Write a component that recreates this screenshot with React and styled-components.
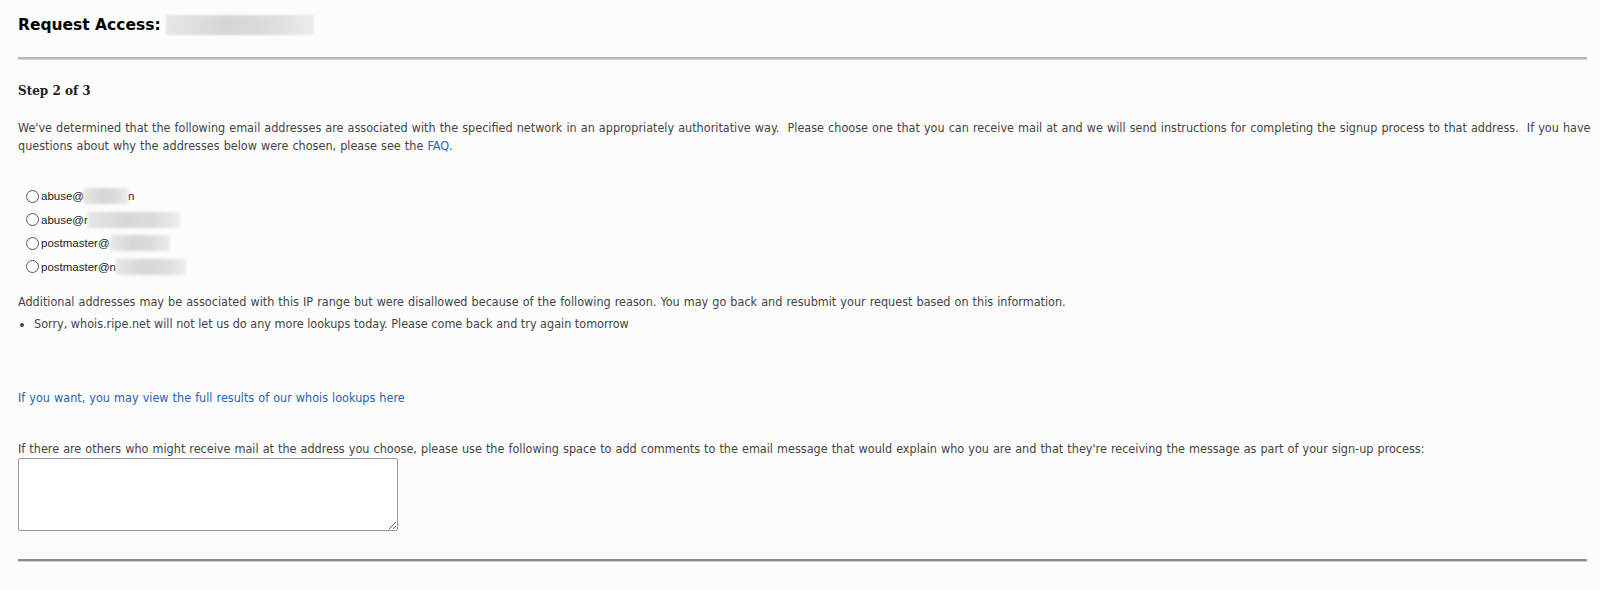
import React from "react";
import styled, { createGlobalStyle } from "styled-components";

const Global = createGlobalStyle`
  html, body { margin: 0; padding: 0; background: #fcfcfc; }
  body { font-family: "Liberation Sans", Arial, sans-serif; color: #333; }
`;

const Page = styled.div`
  padding: 14px 13px 0 18px;
  height: 590px;
  box-sizing: border-box;
`;

const Title = styled.h1`
  margin: 0;
  display: flex;
  align-items: center;
  font-family: "DejaVu Sans", Verdana, sans-serif;
  font-size: 15.5px;
  font-weight: bold;
  color: #000;
  height: 21px;
`;

const Blur = styled.span`
  display: inline-block;
  width: ${(p) => p.$w}px;
  height: ${(p) => p.$h}px;
  background: linear-gradient(90deg, #e6e6e6, #d6d6d6 40%, #dcdcdc 70%, #ececec);
  filter: blur(${(p) => p.$blur || 1}px);
  margin-left: ${(p) => p.$ml || 0}px;
`;

const Rule = styled.div`
  height: 0;
  border-top: 2px solid ${(p) => (p.$dark ? "#8a8a8a" : "#b8b8b8")};
  border-bottom: 1px solid #d4d4d4;
  margin: ${(p) => p.$m};
`;

const Step = styled.div`
  font-family: "DejaVu Serif", Georgia, serif;
  font-weight: bold;
  font-size: 12px;
  color: #222;
  margin-top: 24px;
`;

const Para = styled.p`
  margin: ${(p) => p.$m || "0"};
  font-size: 12.5px;
  line-height: 18px;
  color: #444;
  font-family: "DejaVu Sans Condensed", "Liberation Sans", sans-serif;
  word-spacing: 0.5px;
`;

const Link = styled.a`
  color: #2862b0;
  text-decoration: none;
`;

const RadioList = styled.div`
  display: flex;
  flex-direction: column;
  gap: 5.5px;
  margin: 32px 0 0 8px;
`;

const RadioRow = styled.label`
  display: flex;
  align-items: center;
  height: 18px;
  font-family: "Liberation Sans", Arial, sans-serif;
  font-size: 11.5px;
  color: #222;
`;

const Radio = styled.span`
  width: 13px;
  height: 13px;
  border: 1px solid #555;
  border-radius: 50%;
  background: #fff;
  margin-right: 2px;
  box-sizing: border-box;
`;

const Bullets = styled.ul`
  margin: 4px 0 0 0;
  padding-left: 16px;
  font-size: 12.5px;
  line-height: 18px;
  color: #444;
  font-family: "DejaVu Sans Condensed", "Liberation Sans", sans-serif;
  li::marker { font-size: 12px; }
`;

const TextArea = styled.textarea`
  display: block;
  width: 380px;
  height: 73px;
  margin: 0;
  border: 1px solid #999;
  border-radius: 2px;
  background: #fff;
  box-sizing: border-box;
  resize: both;
`;

const emails = [
  { pre: "abuse@", mid: "", w: 44, tail: "n" },
  { pre: "abuse@", mid: "r", w: 92, tail: "" },
  { pre: "postmaster@", mid: "", w: 60, tail: "" },
  { pre: "postmaster@", mid: "n", w: 70, tail: "" },
];

export default function App() {
  return (
    <>
      <Global />
      <Page>
        <Title>
          Request Access:&nbsp;<Blur $w={148} $h={20} />
        </Title>
        <Rule $m="22px 0 0 0" />
        <Step>Step 2 of 3</Step>
        <Para $m="21px -10px 0 0">
          We've determined that the following email addresses are associated with the specified network in an appropriately authoritative way.&nbsp; Please choose one that you can receive mail at and we will send instructions for completing the signup process to that address.&nbsp; If you have questions about why the addresses below were chosen, please see the <Link href="#">FAQ</Link>.
        </Para>
        <RadioList>
          {emails.map((e, i) => (
            <RadioRow key={i}>
              <Radio />
              {e.pre}
              {e.mid}
              <Blur $w={e.w} $h={16} $blur={1.5} />
              {e.tail}
            </RadioRow>
          ))}
        </RadioList>
        <Para $m="17px 0 0 0">
          Additional addresses may be associated with this IP range but were disallowed because of the following reason. You may go back and resubmit your request based on this information.
        </Para>
        <Bullets>
          <li>Sorry, whois.ripe.net will not let us do any more lookups today. Please come back and try again tomorrow</li>
        </Bullets>
        <Para $m="56px 0 0 0">
          <Link href="#">If you want, you may view the full results of our whois lookups here</Link>
        </Para>
        <Para $m="33px 0 0 0">
          If there are others who might receive mail at the address you choose, please use the following space to add comments to the email message that would explain who you are and that they're receiving the message as part of your sign-up process:
        </Para>
        <TextArea />
        <Rule $dark $m="28px 0 0 0" />
      </Page>
    </>
  );
}
